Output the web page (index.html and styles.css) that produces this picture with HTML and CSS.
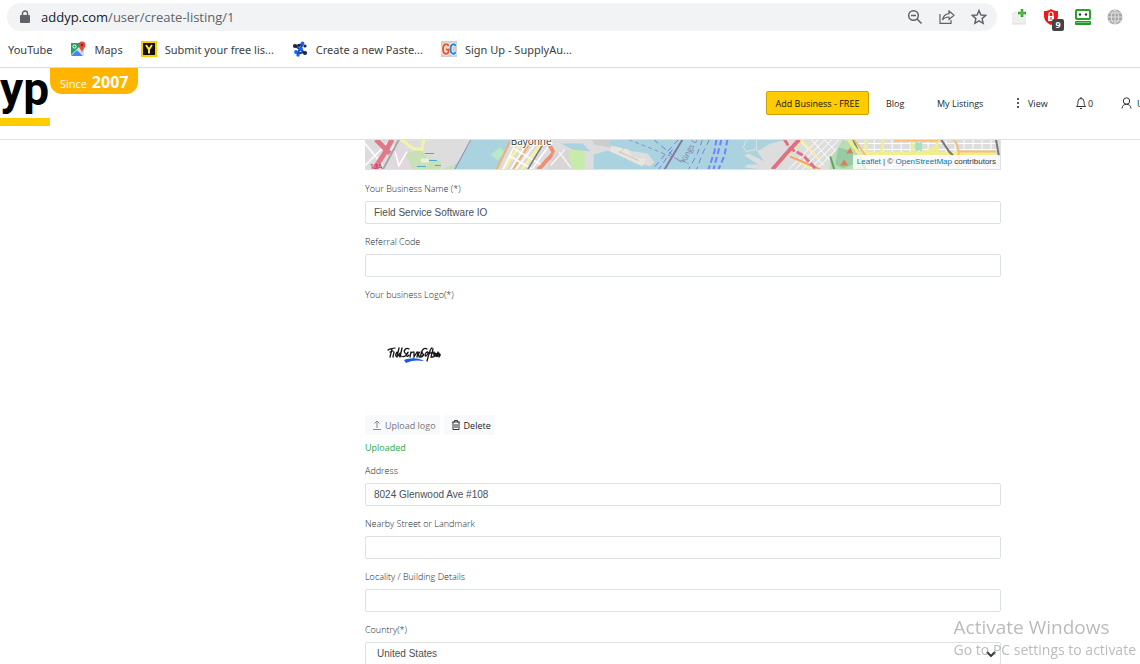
FILE: index.html
```html
<!DOCTYPE html>
<html lang="en">
<head>
	<meta charset="UTF-8">
	<title>Create listing</title>
	<link rel="stylesheet" href="styles.css">
</head>
<body>
	<div class="browser">
		<div class="toolbar">
			<div class="address-bar">
				<svg width="10" height="14" viewBox="0 0 10 14"><path d="M2.5 6V3.5a2.5 2.5 0 0 1 5 0V6" fill="none" stroke="#5f6368" stroke-width="1.4"/><rect y="5" width="10" height="8" rx="1" fill="#5f6368"/></svg>
				<div class="url"><span>addyp.com</span>/user/create-listing/1</div>
				<div class="address-icons">
					<svg width="16" height="16" viewBox="0 0 16 16" fill="none" stroke="#5f6368" stroke-width="1.5"><circle cx="6.5" cy="6.5" r="4.8"/><path d="M10 10l4.5 4.5M4 6.5h5"/></svg>
					<svg width="16" height="16" viewBox="0 0 16 16" fill="none" stroke="#5f6368" stroke-width="1.2"><path d="M1 5v9.4h11V11M10 2l5 4.3-5 4.2V8C7 8 5 8.8 3.5 11 4 7.5 6 5 10 4.6z"/></svg>
					<svg width="16" height="16" viewBox="0 0 16 16" fill="none" stroke="#5f6368" stroke-width="1.4"><path d="M8 1.500l1.900 4.500 4.900.4-3.700 3.200 1.100 4.800L8 11.900l-4.200 2.500 1.100-4.800L1.200 6.400l4.900-.4z"/></svg>
				</div>
			</div>
			<div class="extensions">
				<svg width="16" height="16" viewBox="0 0 16 16"><path d="M1 5h14v10H1z" fill="#eeeeee"/><path d="M1 5l4-2v2M1 15h14" fill="none" stroke="#dddddd"/><path d="M11 0v8M7 4h8" stroke="#2f9e2f" stroke-width="2.6"/><path d="M11 1v6M8 4h6" stroke="#55cc44"/></svg>
				<div class="blocker">
					<svg width="16" height="16" viewBox="0 0 16 16"><path d="M8 0c2 1.500 4 2 7 2v5c0 4-2.500 7-7 9-4.500-2-7-5-7-9V2c3 0 5-.5 7-2z" fill="#f01818"/><rect x="5" y="7" width="6" height="5" fill="#fff"/><path d="M6 7V5a2 2 0 0 1 4 0v2" fill="none" stroke="#fff" stroke-width="1.2"/><path d="M8 8v3" stroke="#f01818"/></svg>
					<span class="count">9</span>
				</div>
				<svg width="16" height="16" viewBox="0 0 16 16"><rect x="1" y="1" width="14" height="9" rx="1" fill="#fff" stroke="#27a327" stroke-width="2"/><circle cx="5" cy="5.5" r="1.2" fill="#333"/><circle cx="11" cy="5.5" r="1.2" fill="#333"/><rect y="12" width="16" height="4" rx="1" fill="#27962a"/><path d="M1 13.500h14" stroke="#6cd06c"/></svg>
				<svg width="16" height="16" viewBox="0 0 16 16"><circle cx="8" cy="8" r="7.5" fill="#a6a6a6"/><path d="M8 0v16M0 8h16M1.500 4h13M1.500 12h13M8 .5C3 4 3 12 8 15.500M8 .5c5 3.500 5 11.500 0 15" fill="none" stroke="#eee" stroke-width=".8"/></svg>
			</div>
		</div>
		<div class="bookmarks">
			<a href="#">YouTube</a>
			<a href="#">
				<svg width="16" height="16" viewBox="0 0 16 16"><rect x="1" y="2" width="13" height="13" rx="1" fill="#eee"/><path d="M1 2h9l-1 4-8 8z" fill="#1fa463"/><path d="M1 15l6-6 6 6z" fill="#4285f4"/><path d="M7 9l3-3 4 4v5z" fill="#dadada"/><circle cx="4.5" cy="5.5" r="1.6" fill="none" stroke="#fff"/><path d="M12 12c0-3-3.500-5-3.500-8a3.500 3.500 0 0 1 7 0c0 3-3.500 5-3.500 8z" fill="#e24b40"/><circle cx="12" cy="4" r="1.2" fill="#8c1d18"/></svg>
				Maps
			</a>
			<a href="#">
				<svg width="16" height="16" viewBox="0 0 16 16"><rect width="16" height="16" fill="#ffcc00"/><rect x="2" y="2" width="12" height="12" fill="#111"/><path d="M5 4l3 4.500L11 4M8 8v4.500" fill="none" stroke="#ffe04a" stroke-width="2"/></svg>
				Submit your free lis...
			</a>
			<a href="#">
				<svg width="16" height="16" viewBox="0 0 16 16"><path d="M3 5l9 6M11 3L5 13M4 5l7-2M12 11l-7 2" stroke="#1b3f8f" stroke-width="2"/><g fill="#12284f"><circle cx="3" cy="5" r="2.1"/><circle cx="13" cy="5" r="1.6"/><circle cx="13" cy="12" r="2.1"/><circle cx="7" cy="4.500" r="1.4"/></g><g fill="#1463ff"><circle cx="10.500" cy="2.5" r="1.900"/><circle cx="4" cy="11" r="1.900"/><circle cx="6" cy="14" r="1.700"/><circle cx="9" cy="8" r="2"/></g></svg>
				Create a new Paste...
			</a>
			<a href="#">
				<svg width="16" height="16" viewBox="0 0 16 16"><rect width="16" height="16" fill="#cfcfcf"/><path d="M7.500 5C6.500 2 2 2.500 2 8s4.500 6 5.500 3V8.500H5" fill="none" stroke="#fff" stroke-width="3.5"/><path d="M14.500 5C13.500 2 9.500 2.500 9.500 8s4 6 5 3" fill="none" stroke="#fff" stroke-width="3.5"/><path d="M7.500 5C6.500 2 2 2.500 2 8s4.500 6 5.500 3V8.500H5" fill="none" stroke="#f4511e" stroke-width="2"/><path d="M14.500 5C13.500 2 9.500 2.500 9.500 8s4 6 5 3" fill="none" stroke="#1e88e5" stroke-width="2"/></svg>
				Sign Up - SupplyAu...
			</a>
		</div>
	</div>

	<header class="site-header">
		<a class="logo" href="#">yp</a>
		<div class="since">Since <b>2007</b></div>
		<nav class="site-nav">
			<button type="button" class="add-business">Add Business - FREE</button>
			<a class="blog" href="#">Blog</a>
			<a class="listings" href="#">My Listings</a>
			<a class="view" href="#"><svg width="4" height="12" viewBox="0 0 4 12" fill="#222"><circle cx="2" cy="2" r="1"/><circle cx="2" cy="6" r="1"/><circle cx="2" cy="10" r="1"/></svg>View</a>
			<a class="alerts" href="#"><svg width="10" height="14" viewBox="0 0 10 14" fill="none" stroke="#333"><path d="M.5 10.500h9c-1-1-1.500-2-1.500-5a3 3 0 0 0-6 0c0 3-.5 4-1.500 5zM5 1v1.500M4 12.500h2"/></svg>0</a>
			<a class="user" href="#"><svg width="11" height="12" viewBox="0 0 11 12" fill="none" stroke="#333"><circle cx="5.5" cy="4" r="3.2"/><path d="M1 11.500C1.300 8.500 3 7.300 5.500 7.300s4.200 1.200 4.500 4.200"/></svg>U</a>
		</nav>
	</header>

	<main class="page">
		<div class="listing">
			<div class="map">
				<svg viewBox="0 0 636 30" preserveAspectRatio="xMidYMid slice">
					<rect width="636" height="30" fill="#aad3df"/>
					<!-- land west of the bay -->
					<path d="M0 0h107L92 22 76 30H0z" fill="#dddddd"/>
					<path d="M24 6l20 4 14 20H28z" fill="#e3d7df"/>
					<path d="M40 14l16-4 6 8 14 4 14 2 0 6H48z" fill="#c8e0b6"/>
					<path d="M60 14h9M64 21h8M70 26h10M52 27h9" stroke="#4aa9cf" stroke-width="1"/>
					<path d="M56 19h8v4h-8z" fill="#eef0d5"/>
					<path d="M0 26L26 0M8 30L30 6M0 4l18 22" stroke="#fff" stroke-width="1.5"/>
					<path d="M9 30L19 15 27 0M11 0l14 14" fill="none" stroke="#df7a8b" stroke-width="5"/>
					<path d="M18 30L34 0" stroke="#a7a7a7" stroke-width="2"/>
					<path d="M36 0l12 9 9 1 2-10" fill="none" stroke="#f4f4a5" stroke-width="3"/>
					<path d="M30 12l4 14 8-14" fill="none" stroke="#fff" stroke-width="1.5"/>
					<!-- Bayonne peninsula -->
					<path d="M148 0h77l16 7 16 3 26 4 7 9-5 4-42-16-14 4 0 15H132z" fill="#dddddd"/>
					<path d="M76 0h31L92 24l-16 6z" fill="#dddddd"/>
					<path d="M107 0h41l-16 30H88z" fill="#aad3df"/>
					<path d="M106 0L90 30" stroke="#9a86ad"/>
					<path d="M126 15l9-7 5 5-7 8z" fill="#b9e8c8"/>
					<path d="M146 0l-14 30M166 3l-18 27" stroke="#f4b16b" stroke-width="2"/>
					<path d="M156 4l-17 26M177 4l-20 26" stroke="#f5f2a4" stroke-width="3"/>
					<path d="M152 2l-14 28M162 4l-16 26M171 4l-20 26M185 5l-18 25M144 16l24 14M149 9l30 18" stroke="#fff" stroke-width="1.5"/>
					<path d="M178 5l-15 25" stroke="#777" stroke-width="1.5"/>
					<path d="M183 0c2 12 10 10 2 18-7 6-4 6-12 12" fill="none" stroke="#ef8f72" stroke-width="4"/>
					<path d="M190 12l14-2 14 20h-36z" fill="#d9d4d6"/>
					<path d="M194 12l12 16M186 26l14-16" stroke="#f4f4f4" stroke-width="1.5"/>
					<path d="M203 12l9-3 8 4 0 17h-12z" fill="#c9ebaa"/>
					<path d="M196 4h22l8 8-18-2z" fill="#aad3df"/>
					<path d="M228 0h17l0 8-16-3z" fill="#cdcdcd"/>
					<path d="M246 6l18 4 4 8 14 1-4 8-32-15z" fill="#e8e5df"/>
					<path d="M254 12l20 9M260 8l-5 6" stroke="#c8c4bd"/>
					<!-- ferry lines -->
					<path d="M264 0l60 24" fill="none" stroke="#8c91bd" stroke-dasharray="4 3"/>
					<path d="M318 0l-18 30" stroke="#86779f" stroke-width="2"/>
					<path d="M289 0l28 23M314 0l-12 13-14 17M308 10l-14 20M345 0l-6 12-7 18M338 0l-5 14-9 16" fill="none" stroke="#7180e3" stroke-dasharray="6 4"/>
					<path d="M352 0l-2 12-6 18M357 0l-4 15-4 15M363 0l-3 16-6 14" fill="none" stroke="#7180ff" stroke-width="2" stroke-dasharray="6 3"/>
					<text x="321" y="24" class="county" transform="rotate(-63 321 24)">Kings C</text>
					<!-- Brooklyn -->
					<path d="M382 0l-3 8 3 4 10-2 0-10z" fill="#aad3df" stroke="#e5e0d7"/>
					<path d="M406 4l18-4h212v30H400l-20-2 3-3 11 0-14-9 4-2 16 8-8-11 4-1z" fill="#dddddd"/>
					<g stroke="#fff" stroke-width="1">
						<path d="M424 30l30-30M431 30l30-30M438 30l30-30M445 30l30-30M452 30l30-30M425 4l28 26M434 0l26 26M447 0l18 20M460 0l12 12"/>
						<path d="M492 0v30M501 0v30M510 0v30M519 0v30M528 0v30M537 0v30M546 0v30M555 0v30M564 0v30M573 0v30M582 0v30M591 0v30M600 0v30M609 0v30M618 0v30M627 0v30M488 4h146M488 10h146M488 16h146M488 22h146M488 28h146"/>
					</g>
					<path d="M408 30l30-30M427 16l20 14M438 2l17 18" stroke="#f5f09f" stroke-width="2"/>
					<path d="M426 17L456 30" stroke="#f5a26d" stroke-width="2"/>
					<path d="M408 30l14-16L435 0" fill="none" stroke="#df7184" stroke-width="4"/>
					<path d="M420 0l6 9 13 7 13 14" fill="none" stroke="#df7184" stroke-width="3" stroke-dasharray="7 2"/>
					<path d="M479 0l13 5 11 25h-38l2-12z" fill="#b7deb1"/>
					<path d="M474 8l12 3 7 12-14 6-8-4z" fill="#96cba5"/>
					<path d="M482 14l4-6 3 6zM476 26l4-6 4 6z" fill="#d98051"/>
					<path d="M466 17l4 13M489 0l12 30" stroke="#6a9c68" stroke-width="2"/>
					<path d="M484 0l17 22M502 0v14h130M519 0l-2 15M573 0v14M557 14l17-6M548 0v14" fill="none" stroke="#f0ef8c" stroke-width="3"/>
					<path d="M490 0l12 17M530 1h44M590 0c8 12 3 20 4 30M594 12h38" fill="none" stroke="#f6bd75" stroke-width="2"/>
					<path d="M577 0l8 12 4 4M632 0l3 17" fill="none" stroke="#777" stroke-width="2"/>
					<path d="M551 3h7v8h-7z" fill="#a5e3b7"/>
					<text x="146" y="5" class="town">Bayonne</text>
					<text x="5" y="30" class="road">13A</text>
				</svg>
				<div class="attribution"><a href="#">Leaflet</a> | © <a href="#">OpenStreetMap</a> contributors</div>
			</div>

			<form>
				<div class="field">
					<label for="name">Your Business Name (*)</label>
					<input type="text" id="name" value="Field Service Software IO">
				</div>
				<div class="field">
					<label for="referral">Referral Code</label>
					<input type="text" id="referral">
				</div>
				<div class="field logo-field">
					<label for="upload">Your business Logo(*)</label>
					<div class="preview">
						<svg width="54" height="20" viewBox="0 0 54 20">
							<g fill="none" stroke="#151515" stroke-width="1.3" stroke-linecap="round">
								<path d="M1 5C3 3 5 4 8 3M5 4L3 12M3 7l3-1M7 7l-1 5M9 9c2-2 1-3 0 0s1 3 2 1M12 3l-2 9M15 3l-2 9M14 8c-2 0-3 4-1 3"/>
								<path d="M22 4c-3-2-6 2-4 4 3 1 0 5-4 3M20 9c2-2 1-3 0 0s1 3 2 1M24 7l-1 5M24 8l2-1M27 7l0 5 3-5M31 7l-1 5M33 7c-2 1-2 5 0 4M34 9c2-2 1-3 0 0s1 3 2 1"/>
								<path d="M40 4c-3-2-6 2-5 4 3 1 1 5-3 4M40 7c-3 2-2 6 0 3s1-3 0-3M45 3c-2 0-3 6-5 13M41 8h7M46 4l-2 8h2M47 7l0 5 2-4 0 4 2-5M51 8c-2 2-1 4 0 3l1-3M52 12c2-2 1-4 0-2"/>
							</g>
							<path d="M17 15c5-2 14-3 20 1-7-1-12-1-18 2z" fill="#1758e8"/>
						</svg>
					</div>
					<div class="logo-buttons">
						<button type="button" id="upload" class="muted"><svg width="8" height="10" viewBox="0 0 8 10" fill="none" stroke="#888"><path d="M4 8V1M1.500 3.500L4 1l2.500 2.500M0 9.500h8"/></svg>Upload logo</button>
						<button type="button"><svg width="8" height="10" viewBox="0 0 8 10" fill="none" stroke="#333"><path d="M0 2h8M2.500 2V.5h3V2M1 2v7.500h6V2M3 4v4M5 4v4"/></svg>Delete</button>
					</div>
					<p class="uploaded">Uploaded</p>
				</div>
				<div class="field">
					<label for="address">Address</label>
					<input type="text" id="address" value="8024 Glenwood Ave #108">
				</div>
				<div class="field">
					<label for="street">Nearby Street or Landmark</label>
					<input type="text" id="street">
				</div>
				<div class="field">
					<label for="locality">Locality / Building Details</label>
					<input type="text" id="locality">
				</div>
				<div class="field">
					<label for="country">Country(*)</label>
					<div class="select-wrap">
						<select id="country"><option>United States</option></select>
						<svg width="10" height="6" viewBox="0 0 10 6"><path d="M1 1l4 4 4-4" fill="none" stroke="#343a40" stroke-width="2"/></svg>
					</div>
				</div>
			</form>
		</div>
	</main>

	<div class="watermark">
		<div class="watermark-title">Activate Windows</div>
		<div>Go to PC settings to activate</div>
	</div>
</body>
</html>
```
FILE: styles.css
```css
* {
	box-sizing: border-box;
}
body {
	margin: 0;
	height: 100vh;
	overflow: hidden;
	background: #fff;
	color: #212529;
	font-family: "Open Sans", "Noto Sans", sans-serif;
	font-size: 9px;
}
a {
	color: inherit;
	text-decoration: none;
}
svg {
	display: block;
	flex: none;
}

/* browser bars */
.browser {
	border-bottom: 1px solid #dadce0;
}
.toolbar {
	display: flex;
	align-items: center;
	gap: 14px;
	padding: 3px 17px 0 7px;
}
.address-bar {
	flex: 1;
	display: flex;
	align-items: center;
	gap: 11px;
	height: 28px;
	padding: 0 10px 0 13px;
	border-radius: 14px;
	background: #f1f3f4;
}
.url {
	flex: 1;
	color: #5f6368;
	font-size: 13px;
}
.url span {
	color: #202124;
}
.address-icons, .extensions {
	display: flex;
	gap: 16px;
}
.blocker {
	position: relative;
}
.count {
	position: absolute;
	left: 9px;
	top: 10px;
	width: 12px;
	height: 12px;
	border-radius: 2px;
	background: #444;
	color: #fff;
	font-weight: 700;
	line-height: 12px;
	text-align: center;
}
.bookmarks {
	display: flex;
	gap: 18px;
	height: 36px;
	padding: 0 8px;
	color: #3c4043;
	font-family: "Noto Sans", "Open Sans", sans-serif;
	font-size: 11px;
	white-space: nowrap;
}
.bookmarks a {
	display: flex;
	align-items: center;
	gap: 8px;
}

/* site header */
.site-header {
	display: flex;
	align-items: flex-start;
	height: 72px;
	border-bottom: 1px solid #dee2e6;
	overflow: hidden;
}
.logo {
	width: 50px;
	height: 58px;
	border-bottom: 8px solid #ffcc00;
	color: #000;
	font-family: Roboto, sans-serif;
	font-size: 46px;
	font-weight: 700;
	line-height: 42px;
}
.since {
	height: 26px;
	padding: 0 10px;
	border-radius: 0 0 12px 12px;
	background: #ffb400;
	color: #fff;
	font-size: 11px;
	line-height: 28px;
	white-space: nowrap;
}
.since b {
	font-size: 16px;
	margin-left: 2px;
}
.site-nav {
	display: flex;
	align-items: center;
	height: 70px;
	margin-left: auto;
	white-space: nowrap;
}
.site-nav a {
	display: flex;
	align-items: center;
	flex: none;
}
.add-business {
	width: 103px;
	height: 24px;
	margin-right: 17px;
	padding: 0;
	border: 1px solid #c9a20a;
	border-radius: 2px;
	background: #ffcc00;
	color: #111;
	font-family: inherit;
	font-size: 9px;
}
.blog {
	width: 51px;
}
.listings {
	width: 79px;
}
.view {
	gap: 8px;
	width: 60px;
}
.alerts {
	gap: 2px;
	width: 45px;
}
.user {
	gap: 5px;
	width: 19px;
}

/* listing form */
.page {
	display: grid;
	grid-template-columns: 365fr 636fr 139fr;
}
.listing {
	grid-column: 2;
	min-width: 0;
}
.map {
	position: relative;
	height: 30px;
	margin-bottom: 9px;
	border: solid #dee2e6;
	border-width: 0 1px 1px 0;
}
.map svg {
	width: 100%;
	height: 100%;
}
.town {
	font-size: 10px;
	fill: #333;
	stroke: #fff;
	stroke-width: 2px;
	paint-order: stroke;
}
.road {
	font-size: 7px;
	fill: #b02040;
}
.county {
	font-size: 8px;
	fill: #8379a8;
}
.attribution {
	position: absolute;
	right: 0;
	bottom: 0;
	padding: 0 4px;
	background: rgba(255, 255, 255, 0.8);
	color: #333;
	font-family: "Liberation Sans", Arial, sans-serif;
	font-size: 8px;
	line-height: 14px;
	white-space: nowrap;
}
.attribution a {
	color: #0078a8;
}
.field {
	margin-bottom: 8px;
}
.field label {
	display: block;
	margin-bottom: 2px;
	font-weight: 300;
	line-height: 20px;
}
.field input, .field select {
	display: block;
	width: 100%;
	height: 23px;
	padding: 0 8px;
	border: 1px solid #dce1e5;
	border-radius: 2px;
	background: #fff;
	color: #495057;
	font-family: "Liberation Sans", Arial, sans-serif;
	font-size: 10px;
}
.field select {
	padding: 0 11px;
	appearance: none;
}
.select-wrap {
	position: relative;
}
.select-wrap svg {
	position: absolute;
	right: 5px;
	top: 9px;
}
.preview {
	height: 108px;
	padding: 38px 22px 0;
}
.logo-buttons {
	display: flex;
	gap: 4px;
}
.logo-buttons button {
	display: flex;
	align-items: center;
	gap: 4px;
	height: 20px;
	padding: 0 4px 0 8px;
	border: 0;
	border-radius: 2px;
	background: #f8f9fa;
	color: #212529;
	font-family: inherit;
	font-size: 9px;
	white-space: nowrap;
}
.logo-buttons .muted {
	color: #777;
}
.logo-field {
	margin-bottom: 5px;
}
.uploaded {
	margin: 5px 0 0;
	color: #28a745;
	line-height: 16px;
}

/* desktop watermark */
.watermark {
	position: fixed;
	right: 4px;
	bottom: 4px;
	color: rgba(120, 120, 120, 0.5);
	font-size: 14px;
	line-height: 20px;
	white-space: nowrap;
}
.watermark-title {
	font-size: 19px;
	line-height: 26px;
}
```
